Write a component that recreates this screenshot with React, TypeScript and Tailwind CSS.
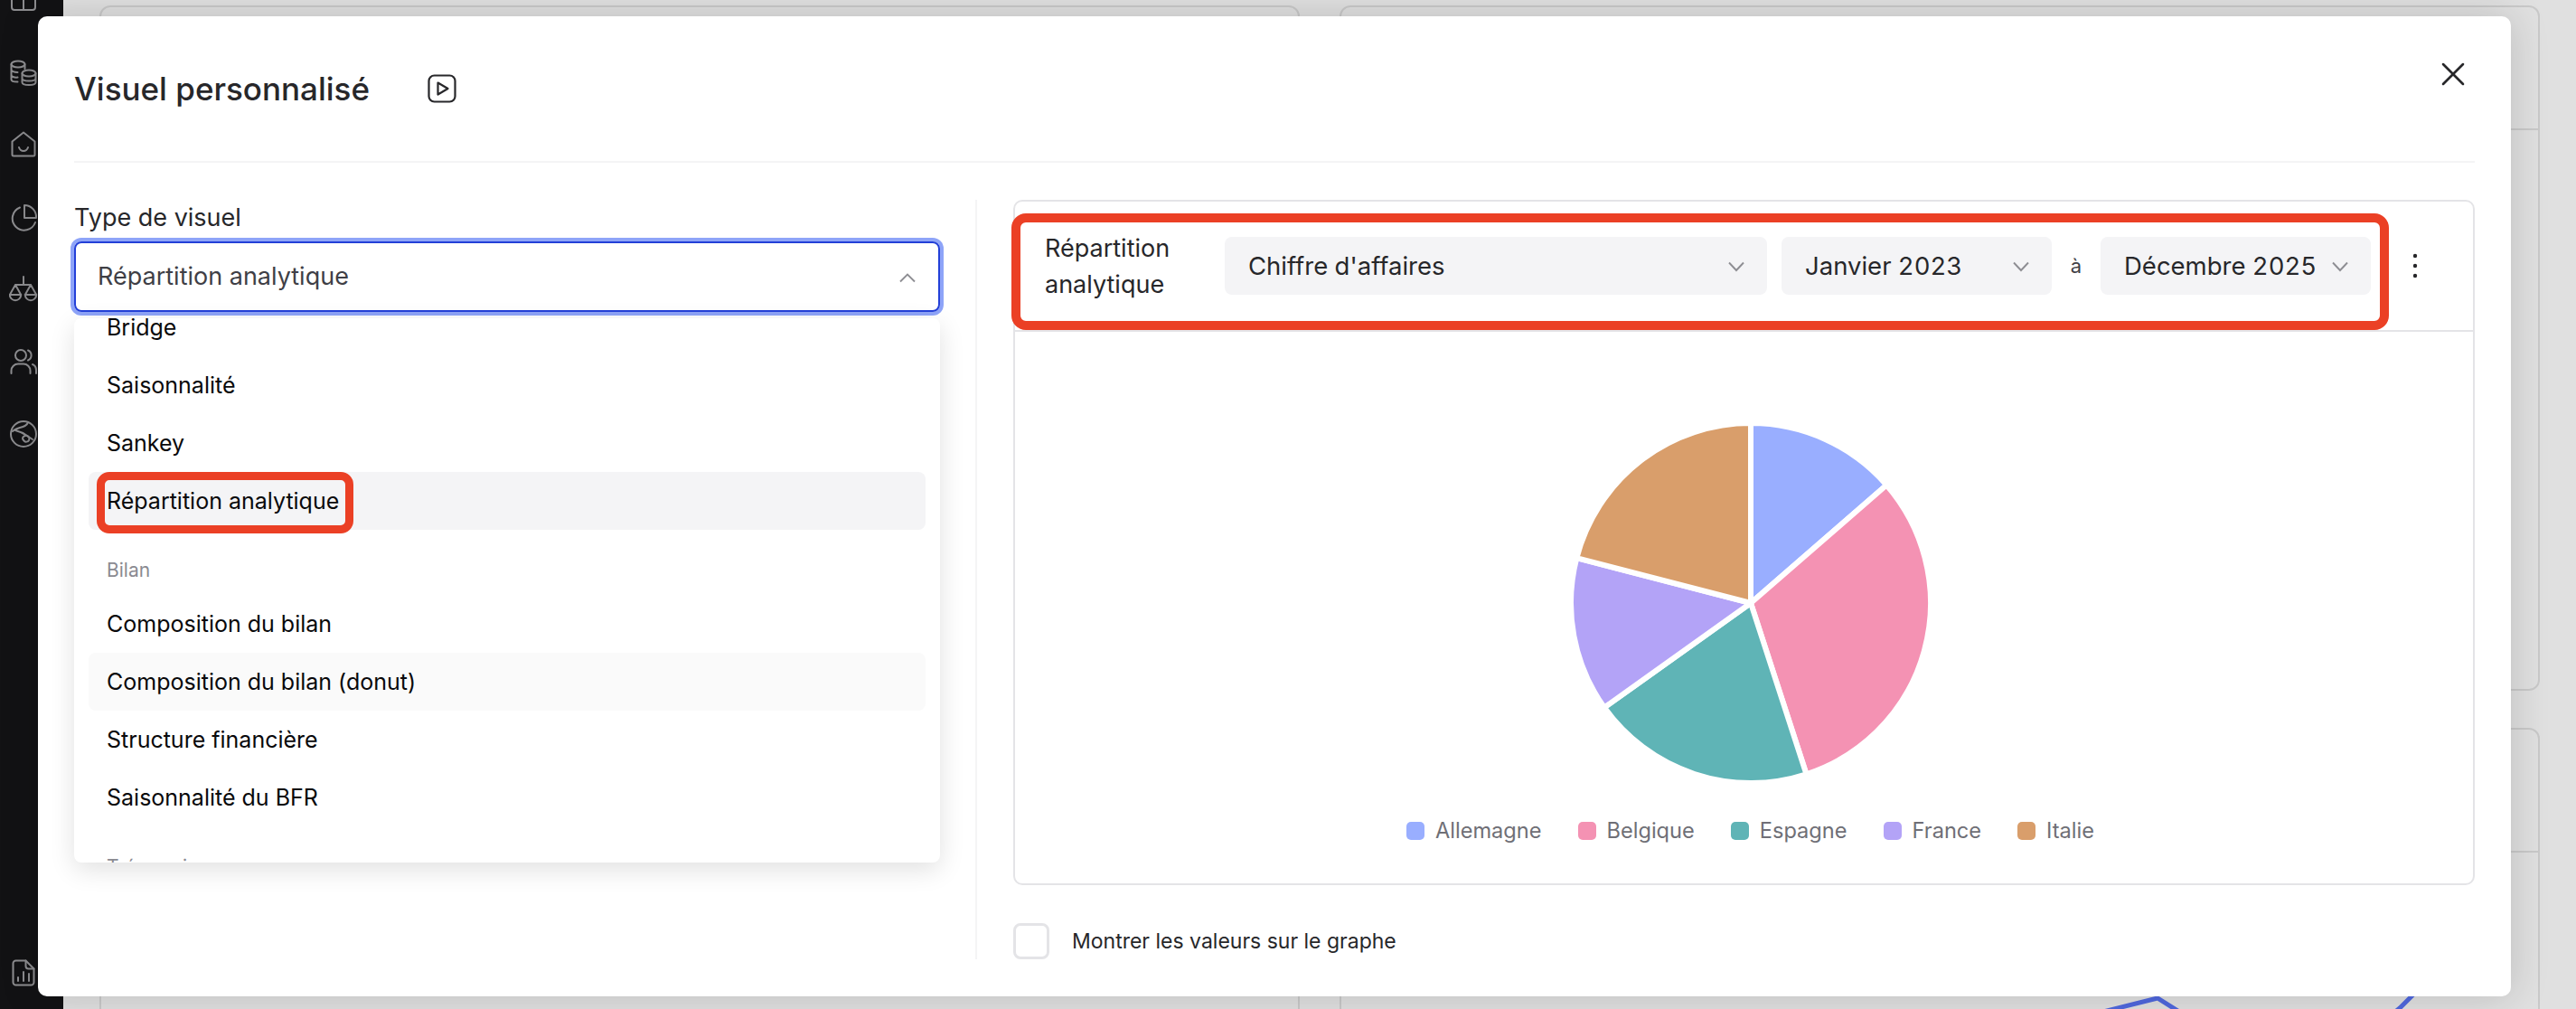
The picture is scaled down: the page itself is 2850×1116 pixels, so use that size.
import { X } from "lucide-react";

const font = "font-['Inter',sans-serif]";

const slices = [
  { color: "#99aeff", from: 0, to: 49 },
  { color: "#f492b3", from: 49, to: 162 },
  { color: "#5fb4b6", from: 162, to: 234.5 },
  { color: "#b3a3f7", from: 234.5, to: 284.5 },
  { color: "#d99e6b", from: 284.5, to: 360 },
];

const legend = [
  { label: "Allemagne", color: "bg-[#99aeff]" },
  { label: "Belgique", color: "bg-[#f492b3]" },
  { label: "Espagne", color: "bg-[#5fb4b6]" },
  { label: "France", color: "bg-[#b3a3f7]" },
  { label: "Italie", color: "bg-[#d99e6b]" },
];

function slicePath(from: number, to: number) {
  const r = 199;
  const c = 200;
  const pt = (deg: number) => {
    const a = (deg * Math.PI) / 180;
    return `${c + r * Math.sin(a)} ${c - r * Math.cos(a)}`;
  };
  const large = to - from > 180 ? 1 : 0;
  return `M${c} ${c} L${pt(from)} A${r} ${r} 0 ${large} 1 ${pt(to)} Z`;
}

function Chevron({ up = false }: { up?: boolean }) {
  return (
    <svg width="20" height="12" viewBox="0 0 20 12" fill="none" className="shrink-0">
      <polyline
        points={up ? "2,10.5 10,2.5 18,10.5" : "2,1.5 10,10 18,1.5"}
        stroke="#8e8e93"
        strokeWidth="1.9"
      />
    </svg>
  );
}

function FakeSelect({ label, width }: { label: string; width: string }) {
  return (
    <div className={`flex h-16 items-center justify-between rounded-lg bg-[#f4f4f6] pl-[26px] pr-6 pt-[2px] text-[27.5px] tabular-nums text-[#27272a] ${width}`}>
      <span className="whitespace-nowrap">{label}</span>
      <Chevron />
    </div>
  );
}

function Item({ label, className = "", children }: { label: string; className?: string; children?: React.ReactNode }) {
  return (
    <div className={`relative flex h-16 items-center rounded-lg pl-5 pt-[2px] text-[25px] text-[#09090b] ${className}`}>
      {label}
      {children}
    </div>
  );
}

function GroupLabel({ label }: { label: string }) {
  return <div className="flex h-[72px] items-center pl-5 pt-[18px] text-[21px] text-[#8a8a91]">{label}</div>;
}

function SideIcon({ children, className = "" }: { children: React.ReactNode; className?: string }) {
  return (
    <svg
      viewBox="0 0 32 32"
      width="32"
      height="32"
      fill="none"
      stroke="#8d8d90"
      strokeWidth="2"
      strokeLinecap="round"
      strokeLinejoin="round"
      className={`absolute left-[10px] ${className}`}
    >
      {children}
    </svg>
  );
}

function Sidebar() {
  return (
    <aside className="relative h-full w-[70px] shrink-0 bg-[#121214]">
      <SideIcon className="top-[-18px]">
        <rect x="3" y="3" width="26" height="26" rx="3" />
        <path d="M16 3v26M3 14h26" />
      </SideIcon>
      <SideIcon className="top-[64px]">
        <ellipse cx="10" cy="7" rx="7.5" ry="3.5" />
        <path d="M2.500 7v17c0 1.600 2.600 2.600 7 2.600M2.500 13c0 1.600 3 3 7 3M2.500 19c0 1.600 3 3 7 2.600M17.500 7v5" />
        <ellipse cx="22" cy="17" rx="7.5" ry="3.5" />
        <path d="M14.500 17v10c0 2 3 3 7.500 3s7.500-1 7.500-3V17M14.500 22.500c0 2 3 3 7.500 3s7.500-1 7.500-3" />
      </SideIcon>
      <SideIcon className="top-[144px]">
        <path d="M16 2.500 3.500 12.500V27a1.500 1.500 0 0 0 1.500 1.500h22a1.500 1.500 0 0 0 1.500-1.500V12.500z" />
        <path d="M11 19c1 3 3 4 5 4s4-1 5-4" />
      </SideIcon>
      <SideIcon className="top-[224px]">
        <path d="M12 5.500A13 13 0 1 0 29 22" />
        <path d="M17 3a13 13 0 0 1 13 14H17z" />
      </SideIcon>
      <SideIcon className="top-[304px]">
        <path d="M16 2v9M7 11h17M7 11 .8 22M7 11l6.200 11M24 11l-6.200 11M24 11l6.200 11" />
        <path d="M.8 22h12.400a6.200 6.200 0 0 1-12.400 0zM17.800 22h12.400a6.200 6.200 0 0 1-12.400 0z" />
      </SideIcon>
      <SideIcon className="top-[384px]">
        <circle cx="13" cy="9" r="6" />
        <path d="M2.500 29v-3a7.500 7.500 0 0 1 7.500-7.500h6a7.500 7.500 0 0 1 7.500 7.500v3" />
        <path d="M21 3.500a6 6 0 0 1 0 11M26 19c2.500 1 4 3.500 4 6.500V29" />
      </SideIcon>
      <SideIcon className="top-[464px]">
        <circle cx="16" cy="16" r="14" />
        <path d="M21 3c-1 4-5 5-9 6-3 1-6 2-8 4M7 12c4 1 9 3 13 6l6 4" />
        <path d="M15 21c0-2 3-4 5-3s3 3 2 5-4 2-5 1-2-2-2-3z" />
      </SideIcon>
      <SideIcon className="top-[1060px]">
        <path d="M7.500 2.500h11l9 9v15a3 3 0 0 1-3 3h-17a3 3 0 0 1-3-3v-21a3 3 0 0 1 3-3z" />
        <path d="M18.500 2.500v6a3 3 0 0 0 3 3h6M10 25v-4M16 25V15M22 25v-8" />
      </SideIcon>
    </aside>
  );
}

function BackCard({ children, className = "" }: { children?: React.ReactNode; className?: string }) {
  return (
    <div className={`rounded-xl border-2 border-[#c9c9c9] ${className}`}>
      <div className="h-[136px] border-b-2 border-[#c9c9c9]" />
      {children}
    </div>
  );
}

function PageBehind() {
  return (
    <div className="grid min-w-0 flex-1 grid-cols-2 grid-rows-[758px_auto] gap-x-[44px] gap-y-[41px] pl-[40px] pr-[40px] pt-[6px]">
      <BackCard />
      <BackCard />
      <BackCard className="h-[400px]" />
      <BackCard className="h-[400px]">
        <svg width="1320" height="260" viewBox="0 0 1320 260" fill="none" className="block">
          <polyline points="823,181 903,161 951,191" stroke="#5068de" strokeWidth="5" />
          <polyline points="1160,181 1171,172 1200,143" stroke="#5068de" strokeWidth="5" />
        </svg>
      </BackCard>
    </div>
  );
}

function Dropdown() {
  return (
    <div className="absolute left-0 right-[39px] top-[131px] z-10 h-[602px] overflow-hidden rounded-lg bg-white px-4 shadow-[0_8px_28px_rgba(0,0,0,0.12)]">
      <div className="mt-[-22px]">
        <Item label="Bridge" />
        <Item label="Saisonnalité" />
        <Item label="Sankey" />
        <Item label="Répartition analytique" className="bg-[#f4f4f6]">
          <div className="absolute left-[9px] top-0 h-[68px] w-[284px] rounded-[14px] border-[9px] border-[#eb4025]" />
        </Item>
        <GroupLabel label="Bilan" />
        <Item label="Composition du bilan" />
        <Item label="Composition du bilan (donut)" className="bg-[#fafafa]" />
        <Item label="Structure financière" />
        <Item label="Saisonnalité du BFR" />
        <GroupLabel label="Trésorerie" />
      </div>
    </div>
  );
}

function LeftColumn() {
  return (
    <div className="relative h-[840px] w-[999px] shrink-0 border-r-2 border-[#f4f4f5] pr-[39px] pt-[3px]">
      <div className="mb-[9px] text-[27px] leading-[34px] text-[#27272a]">Type de visuel</div>
      <div className="flex h-[78px] items-center justify-between rounded-lg border-2 border-[#2340d8] pl-[24px] pr-6 pt-[1px] text-[27px] text-[#3f3f46] shadow-[0_0_0_4px_#8ea4f8]">
        <span>Répartition analytique</span>
        <Chevron up />
      </div>
      <Dropdown />
    </div>
  );
}

function ChartCard() {
  return (
    <div className="h-[758px] rounded-[10px] border-2 border-[#e4e4e7]">
      <div className="relative flex h-[144px] items-center border-b-2 border-[#e4e4e7] pl-[33px]">
        <div className="w-[199px] shrink-0 pt-[2px] text-[27px] leading-[40px] text-[#27272a]">
          Répartition
          <br />
          analytique
        </div>
        <div className="flex items-center">
          <FakeSelect label="Chiffre d'affaires" width="w-[600px]" />
          <div className="w-4" />
          <FakeSelect label="Janvier 2023" width="w-[299px]" />
          <div className="w-[54px] text-center text-[22px] text-[#3f3f46]">à</div>
          <FakeSelect label="Décembre 2025" width="w-[299px]" />
          <svg width="10" height="30" viewBox="0 0 10 30" className="ml-[44px]" fill="#27272a">
            <circle cx="5" cy="4" r="2.200" />
            <circle cx="5" cy="15" r="2.200" />
            <circle cx="5" cy="26" r="2.200" />
          </svg>
        </div>
        <div className="absolute left-[-4px] top-[13px] h-[129px] w-[1524px] rounded-2xl border-[10px] border-[#eb4025]" />
      </div>
      <div className="flex flex-col items-center pl-[14px] pt-[100px]">
        <svg width="400" height="400" viewBox="0 0 400 400">
          {slices.map((s) => (
            <path key={s.color} d={slicePath(s.from, s.to)} fill={s.color} stroke="#ffffff" strokeWidth="6" strokeLinejoin="round" />
          ))}
        </svg>
        <div className="mt-[38px] flex items-center gap-10">
          {legend.map((l) => (
            <div key={l.label} className="flex items-center gap-3 text-[23.6px] leading-7 text-[#6f6f76]">
              <span className={`h-5 w-5 rounded-[5px] ${l.color}`} />
              {l.label}
            </div>
          ))}
        </div>
      </div>
    </div>
  );
}

function Modal() {
  return (
    <div className="absolute left-[42px] top-[18px] flex h-[1084px] w-[2736px] flex-col rounded-[10px] bg-white px-10 shadow-[0_0_44px_rgba(0,0,0,0.16)]">
      <div className="flex h-[162px] shrink-0 items-start justify-between border-b-2 border-[#f4f4f5]">
        <div className="mt-[62px] flex items-center gap-[64px]">
          <h1 className="text-[35px] font-[450] leading-9 text-[#27272a]">Visuel personnalisé</h1>
          <svg width="32" height="32" viewBox="0 0 32 32" fill="none" stroke="#27272a" strokeWidth="2.200" strokeLinejoin="round">
            <rect x="1.500" y="1.500" width="29" height="29" rx="6" />
            <path d="M11.500 9.500 22.500 16l-11 6.500z" />
          </svg>
        </div>
        <X size={44} strokeWidth={1.4} color="#27272a" className="mr-[2px] mt-[42px]" />
      </div>
      <div className="flex flex-1 pt-[41px]">
        <LeftColumn />
        <div className="min-w-0 flex-1 pl-10">
          <ChartCard />
          <div className="mt-[42px] flex items-center gap-[25px]">
            <div className="h-10 w-10 rounded-lg border-[3px] border-[#e4e4e7]" />
            <span className="text-[23px] text-[#27272a]">Montrer les valeurs sur le graphe</span>
          </div>
        </div>
      </div>
    </div>
  );
}

export default function App() {
  return (
    <div className={`relative flex h-[1116px] w-[2850px] overflow-hidden bg-[#e0e0e0] ${font}`}>
      <Sidebar />
      <PageBehind />
      <Modal />
    </div>
  );
}
